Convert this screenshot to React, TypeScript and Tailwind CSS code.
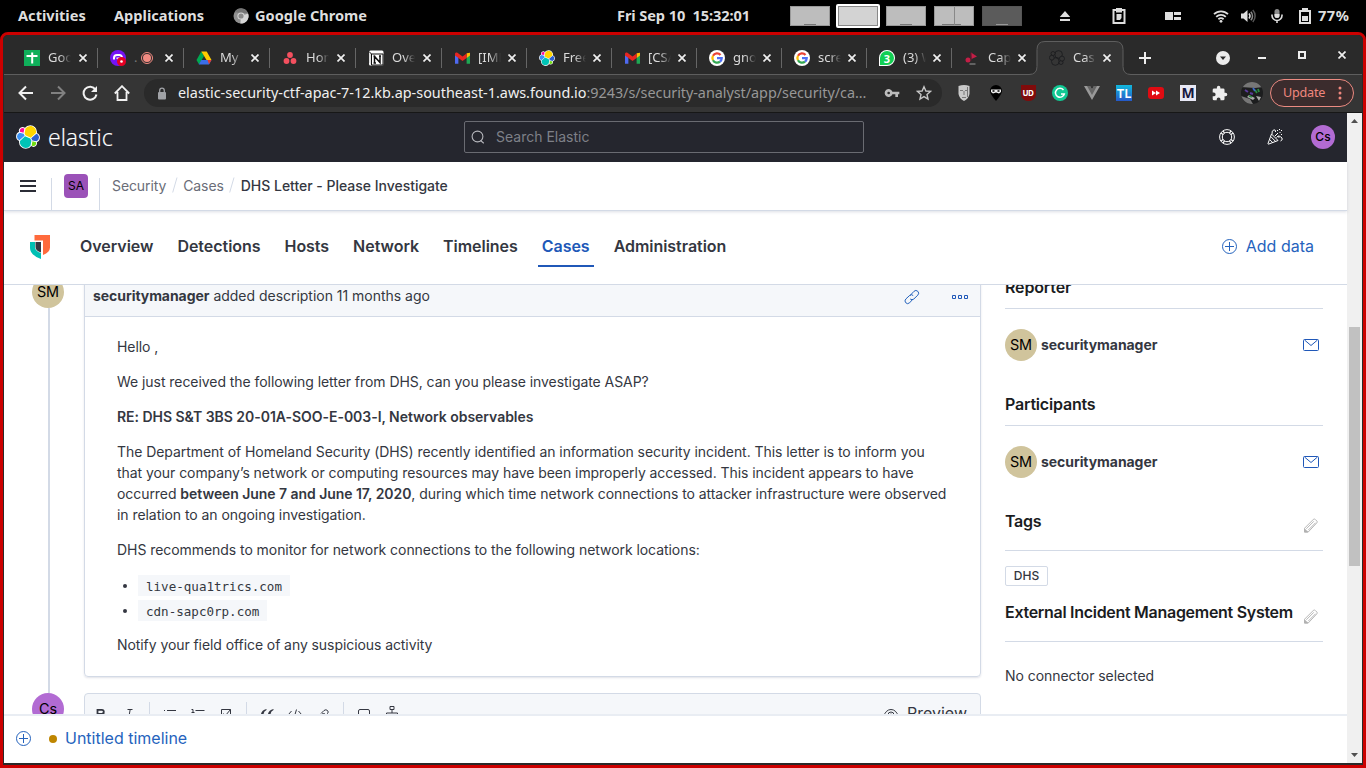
import React from "react";

type SvgProps = { className?: string };

const Chrome = () => (
  <svg width="16" height="16" viewBox="0 0 16 16">
    <circle cx="8" cy="8" r="7.5" fill="#8f8f8f" />
    <path d="M8 8 15.2 5.6A7.5 7.5 0 0 1 7.4 15.5z" fill="#d6d6d6" />
    <path d="M1.5 4.2A7.5 7.5 0 0 1 15 5H8z" fill="#767676" />
    <circle cx="8" cy="8" r="3.6" fill="#d8d8d8" />
    <circle cx="8" cy="8" r="2.6" fill="#8a8a8a" />
  </svg>
);

const Wifi = () => (
  <svg width="16" height="16" viewBox="0 0 16 16" fill="none" stroke="#dedede" strokeWidth="1.8">
    <path d="M1 6.2a10 10 0 0 1 14 0M3.2 8.8a7 7 0 0 1 9.6 0M5.4 11.2a4 4 0 0 1 5.2 0" />
    <circle cx="8" cy="13.3" r="1.4" fill="#dedede" stroke="none" />
  </svg>
);

const Volume = () => (
  <svg width="16" height="16" viewBox="0 0 16 16" fill="none" strokeWidth="1.5">
    <path d="M1 5.5h2.5L7.5 2v12L3.5 10.5H1z" fill="#dedede" />
    <path d="M9 5.5a4 4 0 0 1 0 5" stroke="#dedede" />
    <path d="M10.8 3.8a6 6 0 0 1 0 8.4" stroke="#8a8a8a" />
    <path d="M12.8 2a9 9 0 0 1 0 12" stroke="#555" />
  </svg>
);

const Mic = () => (
  <svg width="16" height="16" viewBox="0 0 16 16" fill="none">
    <rect x="5.5" y="1" width="5" height="9" rx="2.5" fill="#8c8c8c" />
    <path d="M5.5 6h5v1.5a2.5 2.5 0 0 1-5 0z" fill="#e0e0e0" />
    <path d="M3 6.5v1a5 5 0 0 0 10 0v-1M8 12.5V15" stroke="#dedede" strokeWidth="1.6" />
  </svg>
);

const Battery = () => (
  <svg width="14" height="16" viewBox="0 0 14 16">
    <path d="M4 0h6v2h3v14H1V2h3z" fill="#dedede" />
    <path d="M3 4h8v10H3z" fill="#000" />
    <path d="M4 8h6v5H4z" fill="#dedede" />
  </svg>
);

function SystemBar() {
  return (
    <header className="flex h-8 shrink-0 items-center text-[14.6px] font-bold text-[#dedede]">
      <span className="ml-[18px] w-24">Activities</span>
      <span className="w-[119px]">Applications</span>
      <Chrome />
      <span className="ml-1.5 w-[362px]">Google Chrome</span>
      <span className="w-[173px] whitespace-pre tracking-[-0.1px]">Fri Sep 10  15:32:01</span>
      <div className="flex items-center">
        <div className="flex h-5 w-10 items-end justify-center border border-[#999] bg-[#bdbdbd]"><i className="h-px w-3 bg-[#777]" /></div>
        <div className="ml-1.5 h-6 w-11 rounded-[2px] border-2 border-white bg-[#888] p-px"><div className="h-full bg-[#d3d3d3]" /></div>
        <div className="ml-1.5 flex h-5 w-10 items-end justify-center border border-[#999] bg-[#bdbdbd]"><i className="h-px w-3 bg-[#777]" /></div>
        <div className="ml-2 flex h-5 w-10 border border-[#999] bg-[#888]">
          <div className="mr-px flex flex-1 items-end justify-end bg-[#bdbdbd]"><i className="h-px w-3 bg-[#777]" /></div>
          <div className="flex flex-1 items-end bg-[#bdbdbd]"><i className="h-px w-1.5 bg-[#777]" /></div>
        </div>
        <div className="ml-2 flex h-5 w-10 items-end justify-center border border-[#555] bg-[#5b5b5b]"><i className="h-px w-3 bg-[#999]" /></div>
      </div>
      <svg className="ml-[37px]" width="12" height="12" viewBox="0 0 12 12" fill="#dedede"><path d="M6 1l5.200 6H.8zM1 9h10v2H1z" /></svg>
      <svg className="ml-[41px]" width="14" height="16" viewBox="0 0 14 16"><path d="M.5 1H4V0h6v1h3.500v15H.5z" fill="#dedede" /><path d="M2.500 3h9v11h-9z" fill="#000" /><path d="M4 3h6v1.500H4zM4.500 6h5v4L8 12H4.500z" fill="#dedede" /></svg>
      <svg className="ml-[39px]" width="16" height="10" viewBox="0 0 16 10" fill="#dedede"><path d="M0 1h8v8H0zM9 1h7v3H9zM9 6h7v3H9z" /></svg>
      <div className="ml-8 flex items-center">
        <Wifi />
        <span className="ml-[11px] flex"><Volume /></span>
        <span className="ml-[13px] flex"><Mic /></span>
        <span className="ml-[13px] flex"><Battery /></span>
        <span className="ml-1.5 text-[14.600px] tracking-[0.500px]">77%</span>
      </div>
    </header>
  );
}

const Sheets = () => (
  <svg width="16" height="16" viewBox="0 0 16 16"><path d="M0 0h16v16H0z" fill="#0faf5a" /><path d="M2.500 6h11M8.200 2.500v11" stroke="#fff" strokeWidth="2" /></svg>
);
const PurpleApp = () => (
  <svg width="16" height="16" viewBox="0 0 16 16">
    <circle cx="8" cy="8" r="8" fill="#7514f5" />
    <path d="M4 9.500V8a3 3 0 0 1 3-3h2.500a2.500 2.500 0 0 1 2.500 2.500M7.500 9V8.500h2.500" stroke="#fff" strokeWidth="2" fill="none" />
    <circle cx="11.500" cy="11.500" r="4.500" fill="#e60023" /><circle cx="11.500" cy="11.500" r="1.300" fill="#fff" />
  </svg>
);
const Drive = () => (
  <svg width="16" height="16" viewBox="0 0 16 16">
    <path d="M5.300 1.500 8 6 3 14.500.500 10z" fill="#00a851" /><path d="M5.300 1.500h5.400L15.500 10h-5z" fill="#ffcc00" />
    <path d="M5.300 9.900h10.200L13 14.500H2.800z" fill="#3b6ee8" /><path d="M11.500 9.900h4L13 14.300z" fill="#e83b2c" />
  </svg>
);
const Asana = () => (
  <svg width="16" height="16" viewBox="0 0 16 16" fill="#f4505f"><circle cx="8" cy="5" r="2.900" /><circle cx="4.500" cy="11" r="2.900" /><circle cx="11.500" cy="11" r="2.900" /></svg>
);
const Notion = () => (
  <svg width="16" height="16" viewBox="0 0 16 16">
    <rect x="1" y=".5" width="14.500" height="15" rx="1.500" fill="#fff" /><path d="M1 1.500 3.500 4v11.500L1 12.500z" fill="#ddd" />
    <path d="M3.500 4h11.500v11H3.500zM1 1.500 3.500 4" stroke="#111" fill="#fff" /><path d="M6.500 13V6.500l5.500 6V6M5.500 6.500h2M5.500 13h2.500M11 6h2" stroke="#111" strokeWidth="1.500" fill="none" />
  </svg>
);
const Gmail = () => (
  <svg width="15" height="12" viewBox="0 0 16 12">
    <path d="M0 1.500V12h3.600V4z" fill="#4f6af0" /><path d="M16 1.500V12h-3.600V4z" fill="#1fa853" />
    <path d="M12.400 1 16 .500v2.700L12.400 6z" fill="#fbbc04" /><path d="M0 3.200V1.600C0 .300 1.500-.400 2.600.400L8 4.500l4.400-3.300V6L8 9.300z" fill="#e8251f" />
  </svg>
);
const Google = () => (
  <svg width="16" height="16" viewBox="0 0 16 16" fill="none" strokeWidth="2.300">
    <circle cx="8" cy="8" r="8" fill="#fff" />
    <path d="M11.500 5A4.600 4.600 0 0 0 4 5.800" stroke="#ea4335" /><path d="M4 5.800a4.600 4.600 0 0 0 0 4.500" stroke="#fbbc05" />
    <path d="M4 10.300a4.600 4.600 0 0 0 7 1.300" stroke="#34a853" /><path d="M11 11.600A4.600 4.600 0 0 0 12.700 8.200H8" stroke="#4f70f5" />
  </svg>
);
const WhatsApp = () => (
  <div className="flex size-4 items-center justify-center rounded-full rounded-bl-[4px] border border-white bg-[#12cf54] text-[11px] font-bold leading-none text-white">3</div>
);
const CapIcon = () => (
  <svg width="16" height="16" viewBox="0 0 16 16"><circle cx="4" cy="10" r="2.500" fill="#c41e46" /><path d="M7 2.500 13 6.500 7.500 9z" fill="#c41e46" /><path d="M7 2.500v8" stroke="#701530" /><path d="M5.500 14h6" stroke="#999" /></svg>
);

const clusterShapes = [
  ["#ffd500", "M12.580 13.787l7.002 3.211 7.066-6.213a7.849 7.849 0 00.152-1.557c0-4.287-3.476-7.773-7.748-7.773a7.733 7.733 0 00-6.386 3.378l-1.176 6.130z"],
  ["#00c4b6", "M5.333 21.228a7.964 7.964 0 00-.151 1.571c0 4.300 3.487 7.797 7.773 7.797a7.760 7.760 0 006.416-3.401l1.167-6.109-1.557-2.989-7.030-3.216z"],
  ["#ff0d9b", "M5.288 9.083l4.800 1.137L11.140 4.734a3.787 3.787 0 00-5.852 4.350z"],
  ["#3c92f5", "M4.871 10.228a5.430 5.430 0 00-3.551 5.100 5.420 5.420 0 003.400 5.045l6.734-6.113-1.236-2.652z"],
  ["#72dd12", "M20.873 27.197a3.755 3.755 0 002.292.788 3.787 3.787 0 003.565-5.036l-4.799-1.126z"],
  ["#2c5fd0", "M21.848 20.563l5.280 1.238a5.432 5.432 0 003.551-5.100c0-2.225-1.377-4.252-3.447-5.045l-6.904 6.070z"],
];

const ElasticLogo = ({ size }: { size: number }) => (
  <svg width={size} height={size} viewBox="0 0 32 32" className="shrink-0">
    <g stroke="#fff" strokeWidth="2.400" fill="#fff">{clusterShapes.map(([c, d]) => <path key={c} d={d} />)}</g>
    {clusterShapes.map(([c, d]) => <path key={c} d={d} fill={c} />)}
  </svg>
);

const DarkCluster = () => (
  <svg width="16" height="16" viewBox="0 0 16 16" fill="#353535" stroke="#1b1c1e" strokeWidth=".8">
    <circle cx="9.600" cy="4.400" r="3.800" /><circle cx="6.300" cy="11.500" r="3.800" /><circle cx="4" cy="3.500" r="2" /><circle cx="2.800" cy="7.700" r="2.400" /><circle cx="12" cy="12.500" r="2" /><circle cx="13" cy="8.600" r="2.500" />
  </svg>
);

const Close = ({ className }: SvgProps) => (
  <svg className={className} width="8" height="8" viewBox="0 0 8 8" stroke="#efefef" strokeWidth="1.700"><path d="M.5.5l7 7M7.500.5l-7 7" /></svg>
);

type Tab = { icon: React.ReactNode; title: string; wide?: boolean; rec?: boolean };
const tabs: Tab[] = [
  { icon: <Sheets />, title: "Goog", wide: true },
  { icon: <PurpleApp />, title: ".", wide: true, rec: true },
  { icon: <Drive />, title: "My", wide: true },
  { icon: <Asana />, title: "Hom", wide: true },
  { icon: <Notion />, title: "Over", wide: true },
  { icon: <Gmail />, title: "[IMP" },
  { icon: <ElasticLogo size={16} />, title: "Free" },
  { icon: <Gmail />, title: "[CSA" },
  { icon: <Google />, title: "gnom" },
  { icon: <Google />, title: "scree" },
  { icon: <WhatsApp />, title: "(3) W" },
  { icon: <CapIcon />, title: "Capt" },
];

const fade = "w-[23px] overflow-hidden whitespace-nowrap [mask-image:linear-gradient(to_right,#000_50%,transparent)]";

function TabStrip() {
  return (
    <div className="flex h-10 shrink-0 items-end border-b border-[#5e5e5e] bg-[#2a2a2a] pl-2 text-[13px] text-[#dadada]">
      {tabs.map((t, i) => (
        <div key={i} className={`flex h-[33px] items-center pt-px ${t.wide ? "w-[86px]" : "w-[85px]"}`}>
          <div className="ml-3 flex w-4 shrink-0 justify-center">{t.icon}</div>
          {t.rec ? (
            <>
              <span className="ml-2 w-[7px] text-[#777]">.</span>
              <svg width="12" height="12" viewBox="0 0 12 12" className="mr-1"><circle cx="6" cy="6" r="5.500" fill="none" stroke="#f28b82" /><circle cx="6" cy="6" r="4" fill="#f28b82" /></svg>
            </>
          ) : (
            <span className={`ml-2 ${fade}`}>{t.title}</span>
          )}
          <Close className={`shrink-0 ${i > 4 ? "ml-[7px]" : "ml-2"}`} />
          {i < 11 && <span className="ml-auto h-5 w-px shrink-0 bg-[#666]" />}
        </div>
      ))}
      <div className="relative flex h-[33px] w-[86px] items-center">
        <svg className="absolute -left-2 bottom-[-1px]" width="102" height="34" viewBox="0 0 102 34" fill="#353535">
          <path d="M0 34v-.5q8 0 8-8V9Q8 .5 16 .5h70q8 0 8 8v17q0 8 8 8v.5z" />
          <path d="M0 33.500q8 0 8-8V8.500q0-8 8-8h70q8 0 8 8v17q0 8 8 8" stroke="#5e5e5e" fill="none" />
        </svg>
        <div className="relative flex items-center pt-px">
          <span className="ml-3"><DarkCluster /></span>
          <span className={`ml-2 ${fade}`}>Cas</span>
          <Close className="ml-[7px]" />
        </div>
      </div>
      <div className="flex h-[33px] items-center pt-px">
        <svg className="ml-4" width="12" height="12" viewBox="0 0 12 12" stroke="#eee" strokeWidth="2"><path d="M6 0v12M0 6h12" /></svg>
        <svg className="ml-[65px]" width="14" height="14" viewBox="0 0 14 14"><circle cx="7" cy="7" r="7" fill="#ececec" /><path d="M4 5.500h6L7 9z" fill="#2a2a2a" /></svg>
      </div>
      <div className="mb-[13px] flex h-3 items-center">
        <span className="mt-1.5 ml-[28px] h-0.5 w-2 bg-[#eee]" />
        <span className="ml-8 size-2 border-2 border-[#eee]" />
        <Close className="ml-8" />
      </div>
    </div>
  );
}

const extensions: React.ReactNode[] = [
  <svg width="16" height="16" viewBox="0 0 16 16"><path d="M2.500 1q5.500-2 11 0v8q-1 5-5.500 7-4.500-2-5.500-7z" fill="#c9c9c9" /><path d="M4 5.500h3M9 5.500h3M8 6v4M6 12.500h4M11.500 2v10" stroke="#777" fill="none" /></svg>,
  <svg width="16" height="16" viewBox="0 0 16 16"><path d="M8 16Q2 9 2 6a6 6 0 0 1 12 0q0 3-6 10z" fill="#000" /><path d="M3 4.500h10v2.500l-2 1.500-3-1-3 1-2-1.500z" fill="#eee" /><path d="M4.500 6h2M9.500 6h2" stroke="#000" strokeWidth="1.500" /></svg>,
  <div className="flex h-4 w-[15px] items-center justify-center rounded-b-[7px] bg-[#800b0b] text-[8px] font-bold tracking-tighter text-white">UD</div>,
  <svg width="16" height="16" viewBox="0 0 16 16"><circle cx="8" cy="8" r="8" fill="#11c994" /><path d="M11.500 5A4.500 4.500 0 1 0 12.300 9H9" stroke="#fff" strokeWidth="1.500" fill="none" /></svg>,
  <svg width="16" height="14" viewBox="0 0 16 14"><path d="M0 0h6l2 3.500L10 0h6L8 14z" fill="#999" /><path d="M3 0h3l2 3.500L10 0h3L8 9z" fill="#666" /></svg>,
  <div className="flex size-4 items-center justify-center bg-gradient-to-b from-[#12b8dc] to-[#2558c8] text-[13px] leading-4 font-semibold text-white">TL</div>,
  <svg width="16" height="14" viewBox="0 0 16 14"><rect y="1" width="16" height="12" rx="3" fill="#e00b12" /><path d="M4 4.500 8 7 4 9.500zM8 4.500 12 7 8 9.500z" fill="#fff" /></svg>,
  <div className="flex size-4 items-center justify-center bg-[#e8e8f5] pb-px text-[14px] leading-4 font-bold text-[#17173f]">M</div>,
  <svg width="16" height="16" viewBox="1 0 23 23" fill="#eee"><path d="M20.500 11H19V7a2 2 0 0 0-2-2h-4V3.500a2.500 2.500 0 0 0-5 0V5H4a2 2 0 0 0-2 2v3.800h1.500a2.700 2.700 0 0 1 0 5.400H2V20a2 2 0 0 0 2 2h3.800v-1.500a2.700 2.700 0 0 1 5.400 0V22H17a2 2 0 0 0 2-2v-4h1.500a2.500 2.500 0 0 0 0-5z" /></svg>,
  <svg width="22" height="22" viewBox="0 0 22 22" className="shrink-0"><clipPath id="av"><circle cx="11" cy="11" r="11" /></clipPath><g clipPath="url(#av)"><path d="M0 0h22v22H0z" fill="#1c1d1e" /><path d="M0 0h22v5l-8 1-14-1z" fill="#777" /><path d="M0 14l9 3 3 5H0z" fill="#777" /><path d="M6 15l6 3 2-2-6-3zM15 14l5 1-2 4z" fill="#aaa" /><path d="M4 8l3 2M9 11l3 1" stroke="#5a3a9a" strokeWidth="2" /><path d="M8 14l3 1M14 8l2 3M17 7l1 3" stroke="#2b8a40" strokeWidth="1.800" /><path d="M12 6l2 3" stroke="#3b69c9" strokeWidth="1.800" /></g></svg>,
];

function Toolbar() {
  return (
    <div className="flex h-[38px] shrink-0 items-center border-b border-[#171717] bg-[#353535] pb-px text-white">
      <div className="flex w-[140px] items-center">
        <svg className="ml-[14px]" width="16" height="16" viewBox="0 0 16 16" fill="none" stroke="#f1f1f1" strokeWidth="2"><path d="M15 8H2M8 1.500 1.500 8 8 14.500" /></svg>
        <svg className="ml-4" width="16" height="16" viewBox="0 0 16 16" fill="none" stroke="#818181" strokeWidth="2"><path d="M1 8h13M8 1.500 14.500 8 8 14.500" /></svg>
        <svg className="ml-4" width="16" height="16" viewBox="0 0 16 16" fill="none" stroke="#f1f1f1" strokeWidth="2"><path d="M13.500 4.500A6.500 6.500 0 1 0 14.500 9.500" /><path d="M15 1v6H9z" fill="#f1f1f1" stroke="none" /></svg>
        <svg className="ml-4" width="16" height="16" viewBox="0 0 16 16" fill="none" stroke="#f1f1f1" strokeWidth="1.800"><path d="M.8 8.500 8 1.200l7.200 7.300M3.500 7v8h9V7" /></svg>
      </div>
      <div className="flex h-7 w-[798px] items-center rounded-full bg-[#2a2a2a] text-[#f0f0f0]">
        <svg className="ml-[13px]" width="10" height="13" viewBox="0 0 10 13"><rect x="1" y="5" width="8" height="7.500" rx="1" fill="#a0a2a6" /><path d="M2.700 5V3.500a2.300 2.300 0 0 1 4.600 0V5" stroke="#a0a2a6" strokeWidth="1.300" fill="none" /></svg>
        <span className="ml-[11px] w-[706px] whitespace-nowrap text-[14.400px]">elastic-security-ctf-apac-7-12.kb.ap-southeast-1.aws.found.io<span className="tracking-[-0.040px] text-[#979797]">:9243/s/security-analyst/app/security/ca...</span></span>
        <svg width="16" height="16" viewBox="0 0 24 24" fill="#bcbcbc"><path d="M12.650 10A6 6 0 1 0 12.650 14H17v4h4v-4h2v-4zM7 14a2 2 0 1 1 0-4 2 2 0 0 1 0 4z" /></svg>
        <svg className="ml-4" width="16" height="16" viewBox="0 0 16 16" fill="none" stroke="#c6c6c6" strokeWidth="1.400"><path d="M8 1.700l1.900 4.300 4.600.4-3.500 3.100 1 4.500L8 11.600 4 14l1-4.500L1.500 6.400 6.100 6z" /></svg>
      </div>
      <div className="ml-1.5 flex">
        {extensions.map((e, i) => <div key={i} className="flex h-8 w-8 items-center justify-center">{e}</div>)}
      </div>
      <div className="ml-0.5 flex h-7 w-[84px] items-center rounded-full border border-[#ec8b82] bg-[#3b2c2d] text-[12.600px] text-[#f0877e]">
        <span className="ml-3 w-[55px] tracking-[-0.200px]">Update</span>
        <svg width="4" height="14" viewBox="0 0 4 14" fill="#f0877e"><circle cx="2" cy="2" r="1.500" /><circle cx="2" cy="7" r="1.500" /><circle cx="2" cy="12" r="1.500" /></svg>
      </div>
    </div>
  );
}

function ElasticHeader() {
  return (
    <div className="flex h-[49px] shrink-0 items-center bg-[#25262e] pb-px">
      <div className="flex w-[460px] items-center pl-3">
        <ElasticLogo size={24} />
        <span className="mt-px ml-2 font-['Open_Sans'] text-[23px] font-light leading-none text-white [-webkit-text-stroke:0.200px_white]">elastic</span>
      </div>
      <div className="flex h-8 w-[400px] items-center rounded-[2px] border border-[#6a6b72] bg-[#25262e] text-[14px] text-[#7e8088]">
        <svg className="ml-1.5" width="14" height="14" viewBox="0 0 14 14" fill="none" stroke="#b4b5bb" strokeWidth="1.100"><circle cx="6.500" cy="6.500" r="5.400" /><path d="M9.500 10.500l3.300 2.700" /></svg>
        <span className="-mt-0.5 ml-[11px]">Search Elastic</span>
      </div>
      <svg className="ml-[355px]" width="16" height="16" viewBox="0 0 16 16" fill="none" stroke="#fff"><circle cx="8" cy="8" r="7.400" /><circle cx="8" cy="8" r="4.700" /><path d="M2.200 4.200l2 1.300M4.200 2.200l1.300 2M11.800 2.200l-1.300 2M13.800 4.200l-2 1.300M2.200 11.800l2-1.300M4.200 13.800l1.300-2M11.800 13.800l-1.300-2M13.800 11.800l-2-1.300" strokeWidth="1.200" /></svg>
      <svg className="ml-8" width="16" height="16" viewBox="0 0 16 16" fill="none" stroke="#fff"><path d="M4.500 5 1 14.500q-.2.800.600.600L11 11.500zM3.700 7.500l5 5M2.600 10.500l3.500 3.500M5 5q-.500-3.500 2-4.200 2 0 1.500 2.200M11 8q3-1 4 1t-1.500 3M8 7l3-3M9.500 8.500q1.500-2 3-1.500" /><path d="M10 1.500h1M12.500 3.500h1M14 1.500h1M14 5.500h1M12 .5h1" strokeWidth="1" /></svg>
      <div className="ml-[28px] flex size-6 items-center justify-center rounded-full bg-[#b26bd3] text-[12px] font-medium text-black">Cs</div>
    </div>
  );
}

const Slash = () => (
  <svg className="mx-[5.500px]" width="6" height="16" viewBox="0 0 6 16" stroke="#d3dae6"><path d="M.7 15.500 5 .5" /></svg>
);

function Breadcrumbs() {
  return (
    <div className="relative z-10 flex h-[49px] shrink-0 items-center border-b border-[#d3dae6] bg-white text-[14px] text-[#6a6d78] shadow-[0_1px_3px_rgba(60,70,110,0.18)]">
      <svg className="ml-4" width="16" height="12" viewBox="0 0 16 12" fill="#2b2d36"><path d="M0 0h16v2H0zM0 5h16v2H0zM0 10h16v2H0z" /></svg>
      <div className="mt-4 ml-[15px] h-8 w-px bg-[#d3dae6]" />
      <div className="ml-3 flex size-6 items-center justify-center rounded-[4px] bg-[#9b52b8] text-[12px] text-black">SA</div>
      <div className="mt-4 ml-[11px] h-8 w-px bg-[#d3dae6]" />
      <div className="-mt-0.5 ml-3 flex items-center">
        <span className="tracking-[-0.100px]">Security</span>
        <Slash />
        <span className="tracking-[-0.100px]">Cases</span>
        <Slash />
        <span className="font-medium tracking-[-0.020px] text-[#343741]">DHS Letter - Please Investigate</span>
      </div>
    </div>
  );
}

const PlusCircle = () => (
  <svg width="16" height="16" viewBox="0 0 16 16" fill="none" stroke="#2563bd"><circle cx="7.500" cy="7.500" r="7" /><path d="M7.500 3v9M3 7.500h9" /></svg>
);

const nav = ["Overview", "Detections", "Hosts", "Network", "Timelines", "Cases", "Administration"];

function SecurityNav() {
  return (
    <nav className="flex h-[74px] shrink-0 items-center border-b border-[#d3dae6] bg-white">
      <svg className="-mt-0.5 ml-[26px]" width="20" height="24" viewBox="0 0 20 24">
        <path d="M4.500 0H20v12.500q0 4.500-7 7.500V5.500H4.500z" fill="#ff6a3c" />
        <path d="M0 7h5v5q0 4 6 6v6Q0 20 0 13z" fill="#00bfb3" />
        <path d="M5.500 7H11v10.500q-5.500-2-5.500-5.500z" fill="#343741" />
      </svg>
      <div className="-mt-px ml-[26px] flex gap-4 text-[16px] font-semibold tracking-[-0.035px] text-[#343741]">
        {nav.map((n) => (
          <span key={n} className={`px-1 pt-1.5 pb-[7px] leading-6 ${n === "Cases" ? "border-b-2 border-[#2058b8] text-[#2058b8]" : "border-b-2 border-transparent"}`}>{n}</span>
        ))}
      </div>
      <div className="-mt-[3px] mr-[33px] ml-auto flex items-center gap-2 text-[16px] text-[#2563bd]"><span className="mt-0.5"><PlusCircle /></span><span>Add data</span></div>
    </nav>
  );
}

const Avatar = ({ text, className }: { text: string; className: string }) => (
  <div className={`flex size-8 shrink-0 items-center justify-center rounded-full text-[14.400px] text-black ${className}`}>{text}</div>
);

const Pencil = () => (
  <svg className="mr-[5px]" width="14" height="15" viewBox="0 0 15 15" fill="none" stroke="#b2b2b2"><path d="M.5 14.500v-4l9.800-9.800q1-.5 2 .5l1.500 1.500q.8 1 0 1.900L4.500 14.500zM2.500 11l8-8M4.500 12.500l8-8" /><path d="M.5 11l3.500 3.500H.5z" fill="#b2b2b2" /></svg>
);

const UserRow = () => (
  <div className="mt-5 flex h-8 items-center">
    <Avatar text="SM" className="bg-[#d0c49c]" />
    <b className="-mt-0.5 ml-1 flex-1 text-[14px] font-bold tracking-[-0.060px]">securitymanager</b>
    <svg className="mr-1" width="16" height="12" viewBox="0 0 16 12" fill="none" stroke="#2058b8"><rect x=".5" y=".5" width="15" height="11" rx="1" /><path d="M1.500 1l6.500 5.500L14.500 1" /></svg>
  </div>
);

const Heading = ({ children, className, edit }: { children: React.ReactNode; className: string; edit?: boolean }) => (
  <div className={`border-b border-[#d3dae6] text-[16px] font-semibold leading-6 tracking-[-0.290px] text-[#1a1c21] ${className}`}>
    <div className="flex h-6 items-center justify-between whitespace-nowrap"><span>{children}</span>{edit && <span className="mt-[9px]"><Pencil /></span>}</div>
  </div>
);

function Sidebar() {
  return (
    <aside className="ml-6 w-[318px] text-[14px] text-[#343741]">
      <Heading className="-mt-[10px] h-[34px]"><span className="tracking-[-0.150px]">Reporter</span></Heading>
      <UserRow />
      <Heading className="mt-[31px] h-[34px]"><span className="tracking-[-0.200px]">Participants</span></Heading>
      <UserRow />
      <Heading className="mt-[31px] h-[42px]" edit>Tags</Heading>
      <span className="mt-[15px] flex h-5 w-[43px] items-center justify-center rounded-[2px] border border-[#d3dae6] text-[12px] font-medium">DHS</span>
      <Heading className="mt-[14px] h-[42px]" edit>External Incident Management System</Heading>
      <p className="mt-[23px] leading-[21px] tracking-[-0.060px]">No connector selected</p>
    </aside>
  );
}

const Code = ({ children }: { children: React.ReactNode }) => (
  <code className="flex h-[21px] items-center bg-[#f5f7fa] px-2 pt-px font-['DejaVu_Sans_Mono','Liberation_Mono',monospace] text-[12.560px] tracking-normal">{children}</code>
);

const ed = "shrink-0 fill-none stroke-[#343741]";
const Sep = () => <span className="-mt-1 h-6 w-px bg-[#d3dae6]" />;

function Editor() {
  return (
    <div className="mt-4 flex h-12 items-start rounded-t-[4px] border border-[#d3dae6] bg-[#f5f7fa] pt-3">
      <svg className={`ml-2 ${ed}`} width="16" height="16" viewBox="0 0 16 16" strokeWidth="1.800"><path d="M4.500 3.800h4.300a2 2 0 0 1 0 4H4.500zM4.500 7.800h5a2.500 2.500 0 0 1 0 5h-5z" /></svg>
      <svg className={`ml-3 ${ed}`} width="16" height="16" viewBox="0 0 16 16"><path d="M6.500 3.500h5M5 13h5M9.200 3.500 7.500 13" /></svg>
      <span className="ml-3 flex"><Sep /></span>
      <svg className={`ml-3 ${ed}`} width="16" height="16" viewBox="0 0 16 16"><path d="M5 4.500h9M5 8.500h9M5 12.500h9M2 4.500h1M2 8.500h1M2 12.500h1" /></svg>
      <svg className={`ml-3 ${ed}`} width="16" height="16" viewBox="0 0 16 16"><path d="M5.500 4.500h9M5.500 8.500h9M5.500 12.500h9M1.500 3.500H3v3M1.500 6.500h3M1.500 9.500h2v2l-2 1.500h3" /></svg>
      <svg className={`ml-3 ${ed}`} width="16" height="16" viewBox="0 0 16 16"><path d="M3.500 3.500h9v9h-9zM5.500 7.500l2 2 5-6" /></svg>
      <span className="ml-3 flex"><Sep /></span>
      <svg className="ml-3 shrink-0 fill-[#343741]" width="16" height="16" viewBox="0 0 16 16"><path d="M7.500 3Q2 4 1.800 9.500q0 3 2.500 3t2.500-2.500q0-2-2.300-2.200Q5 5 7.500 4zM14.500 3Q9 4 8.800 9.500q0 3 2.500 3t2.500-2.500q0-2-2.300-2.200Q12 5 14.500 4z" /></svg>
      <svg className={`ml-3 ${ed}`} width="16" height="16" viewBox="0 0 16 16"><path d="M4.500 5 1.500 8.500l3 3.500M11.500 5l3 3.500-3 3.500M9.500 3.500l-3 10" /></svg>
      <svg className={`ml-3 ${ed}`} width="16" height="16" viewBox="0 0 16 16"><path d="M6 7.500l3-3q2-1.500 3.500 0t0 3l-3 3q-1.500 1-3 0M10 8q-1.500-1-3 0l-3 3q-1.500 1.500 0 3" /></svg>
      <span className="ml-3 flex"><Sep /></span>
      <svg className={`ml-3 ${ed}`} width="16" height="16" viewBox="0 0 16 16"><path d="M2.500 12V5q0-1.500 1.500-1.500h8q1.500 0 1.500 1.500v7" /></svg>
      <svg className={`ml-3 ${ed}`} width="16" height="16" viewBox="0 0 16 16"><path d="M6 .5h4v3H6zM8 3.500V7M2.500 8.500V7h11v1.500M1 8.500h3v3H1zM6.500 8.500h3v3h-3zM12 8.500h3v3h-3z" /></svg>
      <svg className={`mt-px ml-auto ${ed}`} width="16" height="16" viewBox="0 0 16 16"><path d="M.5 9.500Q3 2.500 8 2.500t7.500 7" /><circle cx="8" cy="8" r="3" /><circle cx="8" cy="8" r="1" /></svg>
      <span className="-mt-[5px] mr-[13px] ml-2 text-[16px] leading-6 tracking-normal text-[#343741]">Preview</span>
    </div>
  );
}

function CaseBody() {
  return (
    <main className="flex min-h-0 flex-1 overflow-hidden bg-white">
      <div className="flex w-20 flex-col items-center pl-2">
        <Avatar text="SM" className="-mt-[9px] bg-[#d0c49c]" />
        <div className="ml-0.5 h-[385px] w-0.5 shrink-0 bg-[#d3dae6]" />
        <Avatar text="Cs" className="bg-[#b26bd3]" />
      </div>
      <div className="w-[897px] text-[14px] tracking-[-0.058px] text-[#343741]">
        <article className="-mt-4 h-[408px] rounded-[4px] border border-[#d3dae6] shadow-[0_1px_2px_rgba(60,70,110,0.15)]">
          <div className="flex h-[47px] items-center border-b border-[#d3dae6] bg-[#f5f7fa] pt-1 pr-3 pl-2">
            <b className="font-bold">securitymanager</b>
            <span className="ml-1 tracking-[-0.020px]">added description 11 months ago</span>
            <svg className="mt-[3px] ml-auto" width="16" height="16" viewBox="0 0 16 16" fill="none" stroke="#2563bd"><path d="M5.800 6.800 10 2.300q1.900-1.800 3.800 0t0 3.900L9.800 10q-1.800 1.500-3.600 0M9.200 6.500q-1.800-1.600-3.600 0L1.800 10q-1.700 2 0 3.800t3.800 0L9 10" /></svg>
            <svg className="mt-1 ml-8" width="16" height="4" viewBox="0 0 16 4" fill="none" stroke="#2058b8"><path d="M.5.5h3v3h-3zM6.500.5h3v3h-3zM12.500.5h3v3h-3z" /></svg>
          </div>
          <div className="flex flex-col gap-[14px] px-8 pt-[19px] leading-[21px] whitespace-nowrap">
            <p>Hello ,</p>
            <p>We just received the following letter from DHS, can you please investigate ASAP?</p>
            <p className="font-semibold tracking-[-0.035px]">RE: DHS S&amp;T 3BS 20-01A-SOO-E-003-I, Network observables</p>
            <p>
              The Department of Homeland Security (DHS) recently identified an information security incident. This letter is to inform you<br />
              that your company’s network or computing resources may have been improperly accessed. This incident appears to have<br />
              occurred <b className="font-semibold">between June 7 and June 17, 2020</b>, during which time network connections to attacker infrastructure were observed<br />
              in relation to an ongoing investigation.
            </p>
            <p>DHS recommends to monitor for network connections to the following network locations:</p>
            <ul className="flex flex-col gap-1">
              {["live-qua1trics.com", "cdn-sapc0rp.com"].map((d) => (
                <li key={d} className="flex translate-y-px items-center"><span className="mt-px mr-[11px] ml-1.5 size-1 rounded-full bg-[#343741]" /><Code>{d}</Code></li>
              ))}
            </ul>
            <p className="tracking-[-0.075px]">Notify your field office of any suspicious activity</p>
          </div>
        </article>
        <Editor />
      </div>
      <Sidebar />
    </main>
  );
}

export default function App() {
  return (
    <div className="flex h-[768px] w-[1366px] flex-col overflow-hidden bg-black font-['Noto_Sans',sans-serif]">
      <SystemBar />
      <div className="flex min-h-0 flex-1 flex-col overflow-hidden rounded-t-[8px] border-[3px] border-[#cc0000] bg-[#222]">
        <div className="flex min-h-0 flex-1 flex-col border-x border-b-2 border-[#2a2a2a]">
          <TabStrip />
          <Toolbar />
          <div className="flex min-h-0 flex-1 font-['Inter',sans-serif]">
            <div className="flex w-[1343px] flex-col bg-white">
              <ElasticHeader />
              <Breadcrumbs />
              <SecurityNav />
              <CaseBody />
              <footer className="flex h-[49px] shrink-0 items-center border-t-2 border-[#e9edf3] bg-white pb-px pl-3 text-[16px] text-[#2563bd]">
                <PlusCircle />
                <span className="ml-[17px] size-2 rounded-full bg-[#bf8600]" />
                <span className="-mt-[3px] ml-2">Untitled timeline</span>
              </footer>
            </div>
            <div className="flex w-[15px] flex-col items-center bg-[#f0f0f0]">
              <svg className="mt-1.5" width="7" height="4" viewBox="0 0 7 4" fill="#505050"><path d="M3.500 0 7 4H0z" /></svg>
              <div className="mt-[204px] h-[239px] w-[11px] bg-[#c1c1c1]" />
              <svg className="mt-auto mb-1.5" width="7" height="4" viewBox="0 0 7 4" fill="#505050"><path d="M0 0h7L3.500 4z" /></svg>
            </div>
          </div>
        </div>
      </div>
    </div>
  );
}
